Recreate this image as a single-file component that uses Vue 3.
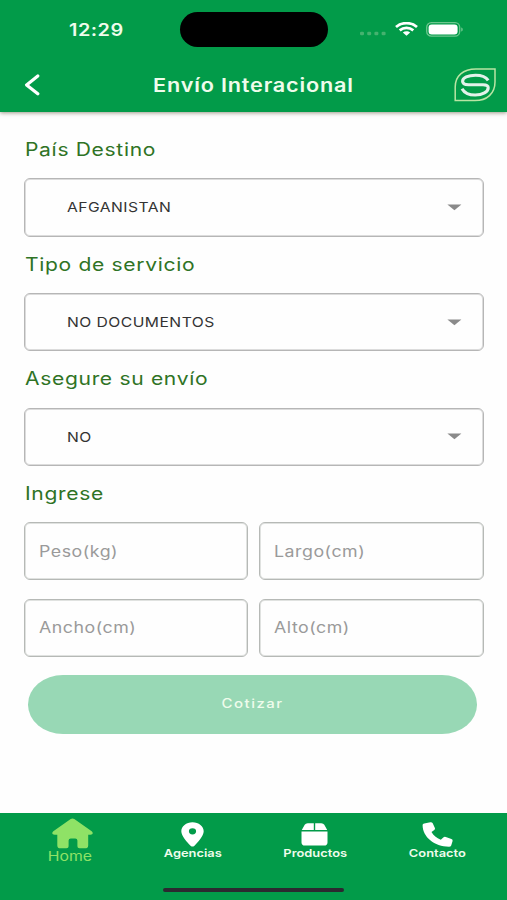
<script setup>
const selects = [
  { label: 'País Destino', value: 'AFGANISTAN', key: 'pais' },
  { label: 'Tipo de servicio', value: 'NO DOCUMENTOS', key: 'tipo' },
  { label: 'Asegure su envío', value: 'NO', key: 'seguro' }
]
const measures = [
  { text: 'Peso(kg)', key: 'peso' },
  { text: 'Largo(cm)', key: 'largo' },
  { text: 'Ancho(cm)', key: 'ancho' },
  { text: 'Alto(cm)', key: 'alto' }
]
</script>

<template>
  <div class="screen">
    <header class="header">
      <div class="status">
        <div class="clock"><span class="wide time">12:29</span></div>
        <div class="island"></div>
        <div class="signals">
          <svg class="dots" width="28" height="6" viewBox="0 0 28 6">
            <g fill="#45b26f">
              <rect x="1" y="0.8" width="4" height="3.4" rx="1.2" />
              <rect x="8.2" y="0.8" width="4" height="3.4" rx="1.2" />
              <rect x="15.4" y="0.8" width="4" height="3.4" rx="1.2" />
              <rect x="22.6" y="0.8" width="4" height="3.4" rx="1.2" />
            </g>
          </svg>
          <svg class="wifi" width="23" height="14" viewBox="0 0 23 14">
            <g fill="none" stroke="#fff" stroke-width="2.8">
              <path d="M1 5 C7 -0.1 16 -0.1 22 5" />
              <path d="M4.7 8.4 C8.7 5.1 14.3 5.1 18.3 8.4" />
            </g>
            <path d="M7.8 10.6 C10 8.7 13 8.7 15.2 10.6 L11.5 13.8 Z" fill="#fff" />
          </svg>
          <svg class="battery" width="38" height="15" viewBox="0 0 38 15">
            <rect x="0.7" y="0.7" width="33" height="13.4" rx="4.6" fill="none" stroke="#6dc68e" stroke-width="1.3" />
            <rect x="2.6" y="2.4" width="29" height="10" rx="3.2" fill="#fff" />
            <path d="M35.2 5.4 C37.3 6 37.3 8.8 35.2 9.4 Z" fill="#6dc68e" />
          </svg>
        </div>
      </div>
      <div class="bar">
        <svg class="back" width="16" height="22" viewBox="0 0 16 22">
          <path d="M13.8 2 L2.6 10.9 L13.8 19.8" fill="none" stroke="#fff" stroke-width="3.2" stroke-linecap="round" stroke-linejoin="round" />
        </svg>
        <h1 class="title"><span class="wide">Envío Interacional</span></h1>
        <svg class="logo" width="42" height="34" viewBox="0 0 42 34">
          <path d="M1.2 32.6 V19 C1.2 8 9 1 22 1 H41 V14 C41 25.5 33 32.6 21 32.6 Z" fill="none" stroke="#b9e5a4" stroke-width="1.5" />
          <path d="M34.2 12.3 C31.5 8.2 27 7.2 21.5 7.2 C14 7.2 8.6 9.6 8.6 13.2 C8.6 15.7 10.8 16.7 14.5 16.7 H29 C32.5 16.7 34.2 17.7 34.2 19.8 C34.2 24 28.5 27 21.2 27 C15.5 27 10.8 25.6 8 20.7" fill="none" stroke="#e2f2ea" stroke-width="3.1" />
        </svg>
      </div>
    </header>

    <main class="form">
      <section v-for="s in selects" :key="s.key">
        <div class="label"><span class="wide">{{ s.label }}</span></div>
        <div class="select">
          <span class="wide value">{{ s.value }}</span>
          <svg width="15" height="7" viewBox="0 0 15 7"><path d="M0.4 0.4 H14.4 L7.4 6.3 Z" fill="#8a8a8a" /></svg>
        </div>
      </section>
      <div class="label"><span class="wide">Ingrese</span></div>
      <div class="measures">
        <div v-for="m in measures" :key="m.key" class="measure"><span class="wide">{{ m.text }}</span></div>
      </div>
      <button class="quote"><span class="wide">Cotizar</span></button>
    </main>

    <nav class="tabs">
      <div class="tab home">
        <svg width="41" height="31" viewBox="0 0 41 31">
          <path d="M18.7 1 Q20.5 -0.2 22.3 1 L39.7 13.2 C41.6 14.7 40.7 16.7 38.5 16.7 H36.2 V27.4 Q36.2 30.3 32.8 30.3 H27.5 Q25.4 30.3 25.4 28.2 V22.5 Q25.4 20.5 23.2 20.5 H18.8 Q16.6 20.5 16.6 22.5 V28.2 Q16.6 30.3 14.5 30.3 H8.6 Q5.3 30.3 5.3 27.4 V16.7 H2.6 C0.3 16.7 -0.6 14.7 1.3 13.2 Z" fill="#8fe266" />
        </svg>
        <span class="wide caption">Home</span>
      </div>
      <div class="tab">
        <svg width="23" height="25" viewBox="0 0 23 25">
          <path fill-rule="evenodd" d="M11.5 0.2 C17.8 0.2 22.7 4.2 22.7 9.3 C22.7 13.8 16.8 20.5 13.2 23.9 Q11.5 25.2 9.8 23.9 C6.2 20.5 0.3 13.8 0.3 9.3 C0.3 4.2 5.2 0.2 11.5 0.2 Z M11.5 6.2 A3.6 3.1 0 1 0 11.5 12.4 A3.6 3.1 0 1 0 11.5 6.2 Z" fill="#fff" />
        </svg>
        <span class="wide caption">Agencias</span>
      </div>
      <div class="tab">
        <svg class="box" width="27" height="23" viewBox="0 0 27 23">
          <path d="M12.8 0.3 V7.1 H0.8 L3.7 1.8 Q4.6 0.3 6.7 0.3 Z M14.2 0.3 H20.3 Q22.4 0.3 23.3 1.8 L26.2 7.1 H14.2 Z M0.5 8.5 H26.5 V19.4 Q26.5 22.5 23 22.5 H4 Q0.5 22.5 0.5 19.4 Z" fill="#fff" />
        </svg>
        <span class="wide caption">Productos</span>
      </div>
      <div class="tab">
        <svg width="31" height="25" viewBox="0 0 31 25">
          <path d="M8.3 0.3 Q10 0 10.7 1.3 L12.9 6 Q13.4 7.2 12.3 8.1 L9.5 10.1 C11.5 13.7 14.5 16.2 18.8 17.8 L21.3 15.5 Q22.3 14.5 23.8 15 L29.4 16.9 Q31 17.5 30.6 18.9 L29.2 23.4 Q28.7 24.7 27 24.7 C12.4 24.7 0.6 15 0.6 3 Q0.6 1.7 2.2 1.4 Z" fill="#fff" />
        </svg>
        <span class="wide caption">Contacto</span>
      </div>
      <div class="indicator"></div>
    </nav>
  </div>
</template>

<style>
body {
  background: #fefefe;
}
</style>

<style scoped>
.screen {
  width: 507px;
  height: 900px;
  display: flex;
  flex-direction: column;
  overflow: hidden;
  background: #fefefe;
  font-family: Inter, "Liberation Sans", sans-serif;
}
.wide {
  display: inline-block;
  white-space: nowrap;
  transform: scaleX(1.17);
  transform-origin: left center;
}
.header {
  height: 112px;
  flex: none;
  background: #029b49;
  box-shadow: 0 1px 4px rgba(60, 50, 20, 0.5);
}
.status {
  height: 59px;
  display: grid;
  grid-template-columns: 180px 148px 1fr;
  align-items: center;
}
.clock {
  padding-left: 69px;
  color: #effcec;
  font-size: 17px;
  font-weight: 600;
  letter-spacing: 0.4px;
}
.island {
  height: 35px;
  border-radius: 18px;
  background: #000;
}
.signals {
  display: flex;
  align-items: center;
  padding-left: 31px;
}
.dots {
  margin-top: 9px;
}
.wifi {
  margin-left: 7.5px;
  margin-top: -1px;
}
.battery {
  margin-left: 8px;
  margin-top: -1px;
}
.bar {
  height: 52px;
  display: grid;
  grid-template-columns: 129px 301px 42px;
  align-items: center;
}
.back {
  margin-left: 24px;
}
.title {
  margin: 0;
  padding-left: 24px;
  color: #effcec;
  font-size: 18.5px;
  line-height: 24px;
  font-weight: 600;
  letter-spacing: 0.7px;
}
.logo {
  margin-left: 24px;
}
.form {
  flex: 1;
  padding: 10px 23.5px 0 24px;
}
.label {
  height: 56.2px;
  line-height: 55.6px;
  padding-left: 1px;
  color: #2f7325;
  font-size: 18px;
  letter-spacing: 0.57px;
}
.select {
  box-sizing: border-box;
  height: 58.5px;
  border: 1px solid #b6b6b6;
  border-radius: 6px;
  box-shadow: inset 0 0 0 1px #dcdcdc;
  display: flex;
  align-items: center;
  justify-content: space-between;
  padding: 0 21px 0 42px;
}
.value {
  color: #333;
  font-size: 13.4px;
  letter-spacing: 0.4px;
}
.measures {
  display: grid;
  grid-template-columns: 1fr 1fr;
  column-gap: 11px;
  row-gap: 18.5px;
}
.measure {
  box-sizing: border-box;
  height: 58px;
  border: 1px solid #b6b9b6;
  border-radius: 6px;
  box-shadow: inset 0 0 0 1px #e0e2e0;
  display: flex;
  align-items: center;
  padding-left: 14px;
  color: #9a9a9a;
  font-size: 15.2px;
  letter-spacing: 0.45px;
}
.quote {
  display: flex;
  align-items: center;
  justify-content: center;
  width: 449px;
  height: 58.5px;
  margin: 18.5px 0 0 4px;
  padding: 0 0 3px;
  border: 0;
  border-radius: 35px / 29.25px;
  background: #98d8b5;
  color: #effcec;
  font-family: inherit;
  font-size: 12.8px;
  font-weight: 500;
  letter-spacing: 1.3px;
}
.quote .wide,
.tab .wide {
  transform-origin: center;
}
.tabs {
  position: relative;
  height: 87px;
  flex: none;
  box-sizing: border-box;
  padding: 9px 8px 0 8.5px;
  background: #029b49;
  display: grid;
  grid-template-columns: repeat(4, 122.6px);
}
.tab {
  display: flex;
  flex-direction: column;
  align-items: center;
  color: #effcec;
  font-size: 11px;
  font-weight: 600;
}
.tab svg {
  flex: none;
  margin-bottom: -3px;
}
.tab .box {
  margin-top: 1px;
}
.caption {
  line-height: 14px;
  margin-top: auto;
  margin-bottom: 40px;
}
.home {
  margin-top: -4px;
  color: #8fe266;
  font-size: 13.5px;
  font-weight: 400;
}
.home svg {
  margin-left: 6px;
}
.home .caption {
  margin-left: 1px;
  margin-bottom: 37px;
}
.indicator {
  position: absolute;
  left: 163px;
  bottom: 8px;
  width: 181px;
  height: 4.5px;
  border-radius: 3px;
  background: #2b2930;
}
</style>
